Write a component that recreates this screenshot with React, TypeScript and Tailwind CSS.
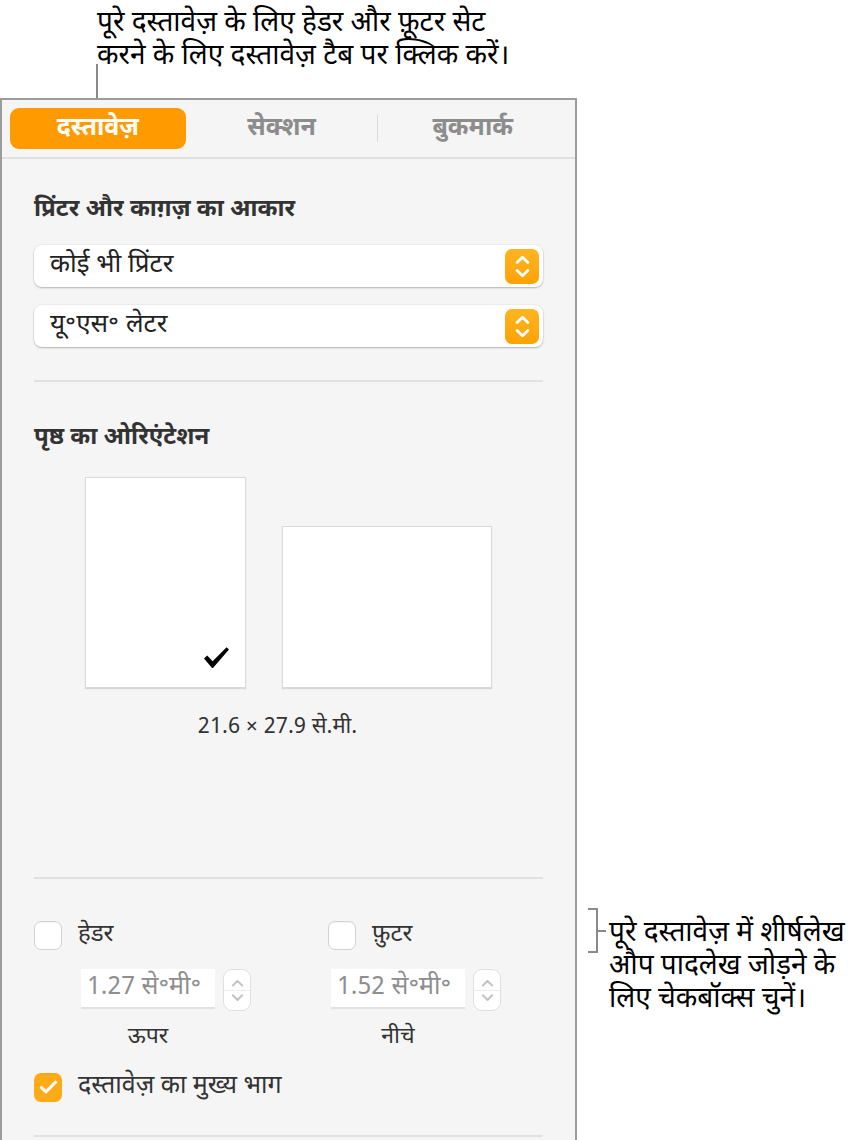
import { Check } from "lucide-react";

const font = { fontFamily: '"Noto Sans Devanagari", "Noto Sans", "Lohit Devanagari", sans-serif' };

function Chev({ up, color, w = 14, sw = 2.6 }: { up?: boolean; color: string; w?: number; sw?: number }) {
  return (
    <svg width={w} height={w * 0.6} viewBox="0 0 14 8.4" fill="none">
      <path
        d={up ? "M2 7 L7 2 L12 7" : "M2 1.4 L7 6.4 L12 1.4"}
        stroke={color}
        strokeWidth={sw}
        strokeLinecap="round"
        strokeLinejoin="round"
      />
    </svg>
  );
}

function Stepper() {
  return (
    <div className="flex h-[35px] w-[34px] flex-col items-center justify-center gap-[5px] rounded-[7px] bg-gradient-to-b from-[#ffb520] to-[#ffa200]">
      <Chev up color="#fff" w={15} />
      <Chev color="#fff" w={15} />
    </div>
  );
}

function Select({ label }: { label: string }) {
  return (
    <div className="flex h-[42px] items-center justify-between rounded-[8px] bg-white pl-[16px] pr-[4px] shadow-[0_1px_2px_rgba(0,0,0,0.25),0_0_0_0.5px_rgba(0,0,0,0.06)]">
      <span className="text-[26px] leading-[30px] text-[#222]">{label}</span>
      <Stepper />
    </div>
  );
}

function Box({ checked }: { checked?: boolean }) {
  return checked ? (
    <div className="flex h-[29px] w-[28px] items-center justify-center rounded-[7px] bg-[#ffab18]">
      <Check className="h-[21px] w-[21px] text-white" strokeWidth={3.6} />
    </div>
  ) : (
    <div className="h-[29px] w-[28px] rounded-[7px] border border-[#d2d2d2] bg-white shadow-[inset_0_1px_1px_rgba(0,0,0,0.05)]" />
  );
}

function Spin({ value, label }: { value: string; label: string }) {
  return (
    <div className="flex flex-col items-center">
      <div className="flex items-start gap-[8px]">
        <div className="flex h-[40px] w-[134px] items-center border-b-2 border-[#e2e2e2] bg-white px-[6px] text-[25px] leading-[30px] text-[#8e8e8e]">
          {value}
        </div>
        <div className="flex h-[42px] w-[28px] flex-col items-center justify-center gap-[3px] rounded-[9px] border border-[#e0e0e0] bg-white">
          <Chev up color="#c4c4c4" w={13} sw={2.2} />
          <div className="h-px w-full bg-[#ececec]" />
          <Chev color="#c4c4c4" w={13} sw={2.2} />
        </div>
      </div>
      <span className="mt-[12px] mr-[36px] text-[23px] leading-[28px] text-[#333]">{label}</span>
    </div>
  );
}

function BigCheck() {
  return (
    <svg width="27" height="23" viewBox="0 0 27 23" className="absolute bottom-[18px] right-[15px]">
      <path
        d="M1 12.5 L4.2 9.6 L9.6 15.2 L23.6 1.2 L26 3.4 L10.4 21.4 Q9.6 22.4 8.6 21.4 Z"
        fill="#000"
      />
    </svg>
  );
}

export default function App() {
  return (
    <div className="relative h-[1140px] w-[854px] overflow-hidden bg-white" style={font}>
      {/* top callout */}
      <div className="pl-[97px] pt-[8px] text-[28px] leading-[33px] text-black">
        <p>पूरे दस्तावेज़ के लिए हेडर और फ़ूटर सेट</p>
        <p>करने के लिए दस्तावेज़ टैब पर क्लिक करें।</p>
      </div>
      <div className="absolute left-[96px] top-[64px] h-[44px] w-[2px] bg-[#8a8a8a]" />

      {/* inspector panel */}
      <div className="absolute left-0 top-[98px] h-[1060px] w-[577px] border-x-2 border-t-2 border-[#9c9c9c] bg-[#f5f5f5]">
        <div className="flex h-[59px] items-center border-b-2 border-[#e0e0e0] px-[8px]">
          <div className="flex h-[41px] w-[179px] items-center justify-center rounded-[9px] bg-[#ff9a00] text-[25px] font-bold leading-[30px] text-white">
            दस्तावेज़
          </div>
          <div className="flex w-[195px] items-center justify-center text-[25px] font-bold leading-[30px] text-[#8c8c8c]">
            सेक्शन
          </div>
          <div className="h-[27px] w-px bg-[#d8d8d8]" />
          <div className="flex w-[192px] items-center justify-center text-[25px] font-bold leading-[30px] text-[#8c8c8c]">
            बुकमार्क
          </div>
        </div>

        <div className="px-[32px]">
          <h3 className="mt-[36px] text-[24px] font-bold leading-[30px] text-[#333]">प्रिंटर और काग़ज़ का आकार</h3>
          <div className="mt-[20px] flex flex-col gap-[18px]">
            <Select label="कोई भी प्रिंटर" />
            <Select label="यू॰एस॰ लेटर" />
          </div>
          <div className="mt-[33px] h-[2px] bg-[#e1e1e1]" />

          <h3 className="mt-[41px] text-[24px] font-bold leading-[30px] text-[#333]">पृष्ठ का ओरिएंटेशन</h3>
          <div className="mt-[24px] flex items-end justify-center gap-[36px]">
            <div className="relative h-[211px] w-[161px] border border-[#dadada] bg-white shadow-[0_1px_1px_rgba(0,0,0,0.12)]">
              <BigCheck />
            </div>
            <div className="h-[162px] w-[210px] border border-[#dadada] bg-white shadow-[0_1px_1px_rgba(0,0,0,0.12)]" />
          </div>
          <p className="mt-[25px] pr-[22px] text-center text-[22px] leading-[30px] text-[#333]">21.6 × 27.9 से.मी.</p>

          <div className="mt-[134px] h-[2px] bg-[#e1e1e1]" />

          <div className="mt-[41px] flex h-[30px] items-center">
            <div className="w-[294px]">
              <label className="flex items-center gap-[16px]">
                <Box />
                <span className="text-[24px] leading-[30px] text-[#333]">हेडर</span>
              </label>
            </div>
            <label className="flex items-center gap-[16px]">
              <Box />
              <span className="text-[24px] leading-[30px] text-[#333]">फ़ुटर</span>
            </label>
          </div>
          <div className="mt-[19px] flex gap-[80px] pl-[47px]">
            <Spin value="1.27 से॰मी॰" label="ऊपर" />
            <Spin value="1.52 से॰मी॰" label="नीचे" />
          </div>
          <label className="mt-[21px] flex h-[30px] items-center gap-[16px]">
            <Box checked />
            <span className="text-[25px] leading-[30px] text-[#333]">दस्तावेज़ का मुख्य भाग</span>
          </label>
          <div className="mt-[33px] h-[2px] bg-[#e1e1e1]" />
        </div>
      </div>

      {/* right callout */}
      <div className="absolute left-[588px] top-[908px] h-[45px] w-[10px] border-y-2 border-r-2 border-[#8a8a8a]" />
      <div className="absolute left-[598px] top-[930px] h-[2px] w-[8px] bg-[#8a8a8a]" />
      <div className="absolute left-[609px] top-[918px] text-[28px] leading-[33px] text-black">
        <p>पूरे दस्तावेज़ में शीर्षलेख</p>
        <p>औप पादलेख जोड़ने के</p>
        <p>लिए चेकबॉक्स चुनें।</p>
      </div>
    </div>
  );
}
